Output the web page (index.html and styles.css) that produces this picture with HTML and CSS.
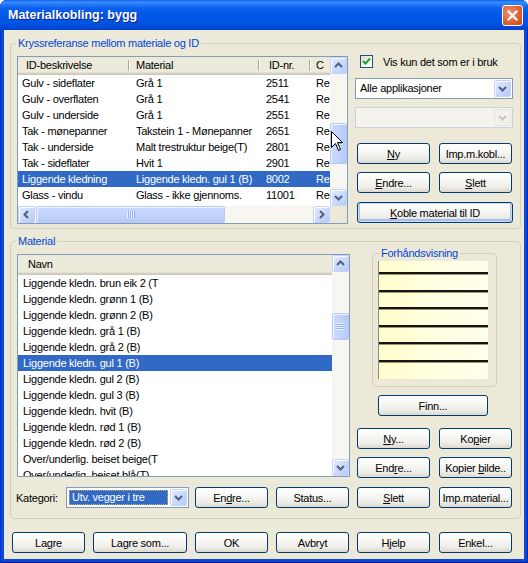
FILE: index.html
```html
<!DOCTYPE html>
<html>
<head>
<meta charset="utf-8">
<link rel="stylesheet" href="styles.css">
</head>
<body>
<div class="window">
  <div class="titlebar">
    <span class="title">Materialkobling: bygg</span>
    <span class="close"><svg width="13" height="13" viewBox="0 0 13 13"><path d="M2.5 2.5 L10.5 10.5 M10.5 2.5 L2.5 10.5" stroke="#fff" stroke-width="2.2" stroke-linecap="square"/></svg></span>
  </div>
  <div class="client">
    <div class="group g1">
      <span class="group-label">Kryssreferanse mellom materiale og ID</span>
      <div class="lv lv1">
        <div class="lv-body">
          <div class="lv-head cols1">
            <span class="hc">ID-beskrivelse</span><span class="hc">Material</span><span class="hc">ID-nr.</span><span class="hc">C</span>
          </div>
          <div class="row cols1"><span>Gulv - sideflater</span><span>Grå 1</span><span>2511</span><span>Re</span></div>
          <div class="row cols1"><span>Gulv - overflaten</span><span>Grå 1</span><span>2541</span><span>Re</span></div>
          <div class="row cols1"><span>Gulv - underside</span><span>Grå 1</span><span>2551</span><span>Re</span></div>
          <div class="row cols1"><span>Tak - mønepanner</span><span>Takstein 1 - Mønepanner</span><span>2651</span><span>Re</span></div>
          <div class="row cols1"><span>Tak - underside</span><span>Malt trestruktur beige(T)</span><span>2801</span><span>Re</span></div>
          <div class="row cols1"><span>Tak - sideflater</span><span>Hvit 1</span><span>2901</span><span>Re</span></div>
          <div class="row cols1 sel"><span>Liggende kledning</span><span>Liggende kledn. gul 1 (B)</span><span>8002</span><span>Re</span></div>
          <div class="row cols1"><span>Glass - vindu</span><span>Glass - ikke gjennoms.</span><span>11001</span><span>Re</span></div>
          <div class="row cols1"><span>Dør - karm</span><span>Grå 2</span><span>11011</span><span>Re</span></div>
        </div>
        <div class="vscroll">
          <span class="sbtn"><svg width="15" height="15" viewBox="0 0 15 15"><path d="M4 9 L7.5 5.5 L11 9" class="chev"/></svg></span>
          <div class="track"><span class="thumb thumb1"><span class="grip-h"></span></span></div>
          <span class="sbtn"><svg width="15" height="15" viewBox="0 0 15 15"><path d="M4 6 L7.5 9.5 L11 6" class="chev"/></svg></span>
        </div>
        <div class="hscroll">
          <span class="sbtn"><svg width="15" height="15" viewBox="0 0 15 15"><path d="M9 4 L5.5 7.5 L9 11" class="chev"/></svg></span>
          <div class="htrack"><span class="hthumb"><span class="grip-v"></span></span></div>
          <span class="sbtn"><svg width="15" height="15" viewBox="0 0 15 15"><path d="M6 4 L9.5 7.5 L6 11" class="chev"/></svg></span>
        </div>
        <div class="corner"></div>
        <svg class="cursor" width="13" height="21" viewBox="0 0 13 21"><path d="M0.5 0.5 L0.5 16.5 L4.5 12.5 L7.5 19.5 L9.5 18.5 L6.5 11.5 L11.5 11.5 Z" fill="#fff" stroke="#000" stroke-width="1"/></svg>
      </div>
      <div class="side1">
        <div class="check"><span class="box"><svg width="11" height="11" viewBox="0 0 11 11"><path d="M2 5 L4.5 7.5 L9 2.5" fill="none" stroke="#21A121" stroke-width="2"/></svg></span><span>Vis kun det som er i bruk</span></div>
        <div class="combo c-apps"><span class="combo-text">Alle applikasjoner</span><span class="sbtn cbtn"><svg width="15" height="15" viewBox="0 0 15 15"><path d="M4 6 L7.5 9.5 L11 6" class="chev"/></svg></span></div>
        <div class="combo disabled"><span class="combo-text"></span><span class="sbtn cbtn dis"><svg width="15" height="15" viewBox="0 0 15 15"><path d="M4 6 L7.5 9.5 L11 6" class="chev dchev"/></svg></span></div>
        <div class="btnrow r1"><button class="btn"><span><u>N</u>y</span></button><button class="btn"><span>Imp.m.kobl...</span></button></div>
        <div class="btnrow r2"><button class="btn"><span><u>E</u>ndre...</span></button><button class="btn"><span><u>S</u>lett</span></button></div>
        <div class="btnrow r3"><button class="btn wide def"><span><u>K</u>oble material til ID</span></button></div>
      </div>
    </div>

    <div class="group g2">
      <span class="group-label">Material</span>
      <div class="g2-top">
        <div class="lv lv2">
          <div class="lv-body">
            <div class="lv-head head2"><span class="hc hc2">Navn</span></div>
            <div class="row row2">Liggende kledn. brun eik 2 (T</div>
            <div class="row row2">Liggende kledn. grønn 1 (B)</div>
            <div class="row row2">Liggende kledn. grønn 2 (B)</div>
            <div class="row row2">Liggende kledn. grå 1 (B)</div>
            <div class="row row2">Liggende kledn. grå 2 (B)</div>
            <div class="row row2 sel">Liggende kledn. gul 1 (B)</div>
            <div class="row row2">Liggende kledn. gul 2 (B)</div>
            <div class="row row2">Liggende kledn. gul 3 (B)</div>
            <div class="row row2">Liggende kledn. hvit (B)</div>
            <div class="row row2">Liggende kledn. rød 1 (B)</div>
            <div class="row row2">Liggende kledn. rød 2 (B)</div>
            <div class="row row2">Over/underlig. beiset beige(T</div>
            <div class="row row2">Over/underlig. beiset blå(T)</div>
          </div>
          <div class="vscroll">
            <span class="sbtn"><svg width="15" height="15" viewBox="0 0 15 15"><path d="M4 9 L7.5 5.5 L11 9" class="chev"/></svg></span>
            <div class="track"><span class="thumb thumb2"><span class="grip-h"></span></span></div>
            <span class="sbtn"><svg width="15" height="15" viewBox="0 0 15 15"><path d="M4 6 L7.5 9.5 L11 6" class="chev"/></svg></span>
          </div>
        </div>
        <div class="side2">
          <div class="group pgroup">
            <span class="group-label">Forhåndsvisning</span>
            <div class="preview">
              <span class="pline"></span><span class="pline"></span><span class="pline"></span><span class="pline"></span><span class="pline"></span><span class="pline"></span>
            </div>
          </div>
          <button class="btn finn"><span>Finn...</span></button>
          <div class="btnrow r4"><button class="btn"><span><u>N</u>y...</span></button><button class="btn"><span>Ko<u>p</u>ier</span></button></div>
          <div class="btnrow r2"><button class="btn"><span>End<u>r</u>e...</span></button><button class="btn"><span>Kopier <u>b</u>ilde..</span></button></div>
        </div>
      </div>
      <div class="kat-row">
        <span class="kat-label">Kategori:</span>
        <div class="combo kat"><span class="combo-text"><span class="kat-sel">Utv. vegger i tre</span></span><span class="sbtn cbtn"><svg width="15" height="15" viewBox="0 0 15 15"><path d="M4 6 L7.5 9.5 L11 6" class="chev"/></svg></span></div>
        <button class="btn m6"><span>En<u>d</u>re...</span></button>
        <button class="btn m8"><span>Status...</span></button>
        <button class="btn m8"><span><u>S</u>lett</span></button>
        <button class="btn m9"><span>Imp.material...</span></button>
      </div>
    </div>

    <div class="bottom">
      <button class="btn"><span>Lagre</span></button>
      <button class="btn w94"><span>Lagre som...</span></button>
      <button class="btn"><span>OK</span></button>
      <button class="btn"><span>Avbryt</span></button>
      <button class="btn"><span>Hjelp</span></button>
      <button class="btn m9x"><span>Enkel...</span></button>
    </div>
  </div>
</div>
</body>
</html>
```

FILE: styles.css
```css
* { box-sizing: border-box; margin: 0; padding: 0; }
body {
  margin: 0;
  background: #ffffff;
  font-family: "Liberation Sans", Arial, sans-serif;
  font-size: 11px;
  letter-spacing: -0.25px;
  color: #000;
}
.window {
  width: 528px;
  height: 563px;
  display: flex;
  flex-direction: column;
  background: #0A48DA;
  border-radius: 7px 7px 0 0;
  overflow: hidden;
  box-shadow: inset 1px 0 #0831C8, inset -1px 0 #0426A8, inset 0 -1px #00138C;
}
.titlebar {
  height: 30px;
  flex: none;
  display: flex;
  align-items: center;
  justify-content: space-between;
  padding: 0 5px 0 8px;
  background: linear-gradient(#0B5EEE 0px, #3A8DFD 2px, #2B7DF8 4px, #0B61ED 8px, #0057E6 16px, #0054E2 23px, #0049D6 28px, #0040C8 30px);
}
.title {
  color: #fff;
  font-weight: bold;
  font-size: 12.5px;
  letter-spacing: 0;
  text-shadow: 1px 1px 0 #0B2390;
}
.close {
  width: 21px;
  height: 21px;
  border: 1px solid #fff;
  border-radius: 3px;
  background: radial-gradient(circle at 35% 35%, #F0906A 0%, #E26A3E 45%, #CC4316 100%);
  display: flex;
  align-items: center;
  justify-content: center;
}
.client {
  flex: 1;
  margin: 0 4px 4px 4px;
  background: #ECE9D8;
  padding: 13px 0 0 6px;
  display: flex;
  flex-direction: column;
  align-items: flex-start;
}
.group {
  position: relative;
  border: 1px solid #D0D0BF;
  border-radius: 4px;
}
.group-label {
  position: absolute;
  top: -7px;
  left: 5px;
  padding: 0 2px;
  background: #ECE9D8;
  color: #0046D5;
  line-height: 13px;
  white-space: nowrap;
}
.g1 {
  width: 511px;
  height: 186px;
  padding: 12px 0 0 6px;
  display: flex;
  align-items: flex-start;
}
.lv {
  border: 1px solid #7F9DB9;
  background: #fff;
  display: grid;
  position: relative;
}
.lv1 {
  width: 331px;
  height: 168px;
  grid-template-columns: 312px 17px;
  grid-template-rows: 149px 17px;
}
.lv-body { overflow: hidden; }
.lv-head {
  height: 18px;
  background: #EBEADB;
  box-shadow: inset 0 -1px #CBC7B8, inset 0 -2px #D6D2C2, inset 0 -3px #E2DECD;
}
.cols1 {
  display: grid;
  grid-template-columns: 112px 130px 51px 19px;
}
.hc {
  line-height: 16px;
  white-space: nowrap;
  overflow: hidden;
  background:
    linear-gradient(#ACA899, #ACA899) right 1px top 3px / 1px 11px no-repeat,
    linear-gradient(#fff, #fff) right 0 top 3px / 1px 11px no-repeat;
}
.cols1 .hc:nth-child(1) { padding-left: 8px; }
.cols1 .hc:nth-child(2) { padding-left: 6px; }
.cols1 .hc:nth-child(3) { padding-left: 9px; }
.cols1 .hc:nth-child(4) { padding-left: 5px; background: none; }
.row {
  height: 16px;
  line-height: 16px;
  white-space: nowrap;
  overflow: hidden;
}
.row span { overflow: hidden; white-space: nowrap; }
.row.cols1 span:nth-child(1) { padding-left: 4px; }
.row.cols1 span:nth-child(2) { padding-left: 6px; }
.row.cols1 span:nth-child(3) { padding-left: 6px; }
.row.cols1 span:nth-child(4) { padding-left: 5px; }
.row.sel { background: #316AC5; color: #fff; }

/* scrollbars */
.vscroll {
  display: flex;
  flex-direction: column;
  background: #F7F6F1;
}
.track { flex: 1; display: flex; flex-direction: column; }
.hscroll {
  display: flex;
  background: #F7F6F1;
}
.htrack { flex: 1; display: flex; }
.corner { background: #ECE9D8; }
.sbtn {
  flex: none;
  width: 17px;
  height: 17px;
  border: 1px solid #C3D3FD;
  border-radius: 2px;
  background: linear-gradient(135deg, #E3EBFE 0%, #CCDAFC 50%, #B7CAF5 100%);
  box-shadow: inset 1px 1px 0 #FBFCFF;
  display: flex;
  align-items: center;
  justify-content: center;
}
.chev { fill: none; stroke: #4D6185; stroke-width: 2; }
.dchev { stroke: #C9C7BA; }
.thumb {
  display: flex;
  align-items: center;
  justify-content: center;
  width: 17px;
  border: 1px solid #B6C9F6;
  border-radius: 2px;
  background: linear-gradient(90deg, #CAD9FD 0%, #C2D3FC 50%, #B6CAF6 100%);
  box-shadow: inset 1px 1px 0 #F3F6FE;
}
.thumb1 { margin-top: 49px; height: 41px; }
.thumb2 { margin-top: 41px; height: 27px; }
.grip-h {
  width: 7px;
  height: 7px;
  background: repeating-linear-gradient(#EEF4FE 0 1px, #8CB0F8 1px 2px);
}
.hthumb {
  display: flex;
  align-items: center;
  justify-content: center;
  margin-left: 1px;
  width: 189px;
  height: 17px;
  border: 1px solid #B6C9F6;
  border-radius: 2px;
  background: linear-gradient(#CAD9FD 0%, #C2D3FC 50%, #B6CAF6 100%);
  box-shadow: inset 1px 1px 0 #F3F6FE;
}
.grip-v {
  width: 8px;
  height: 7px;
  background: repeating-linear-gradient(90deg, #EEF4FE 0 1px, #8CB0F8 1px 2px);
}
.cursor {
  position: absolute;
  left: 313px;
  top: 74px;
}

/* right column 1 */
.side1 {
  width: 158px;
  margin-left: 7px;
  display: flex;
  flex-direction: column;
  align-items: flex-start;
}
.check {
  display: flex;
  align-items: center;
  height: 13px;
  margin: -1px 0 0 5px;
  white-space: nowrap;
}
.box {
  width: 13px;
  height: 13px;
  border: 1px solid #1C5180;
  background: linear-gradient(135deg, #DCDCD7 0%, #F4F4F0 60%, #FFFFFF 100%);
  margin-right: 10px;
  display: flex;
  align-items: center;
  justify-content: center;
}
.combo {
  width: 158px;
  height: 21px;
  border: 1px solid #7F9DB9;
  background: #fff;
  display: flex;
  align-items: center;
  padding: 1px;
}
.c-apps { margin-top: 10px; }
.combo.disabled {
  margin-top: 8px;
  background: #F4F3EE;
  border-color: #C9D2DD;
}
.combo-text {
  flex: 1;
  padding-left: 3px;
  white-space: nowrap;
  overflow: hidden;
  line-height: 17px;
}
.cbtn { height: 17px; }
.cbtn.dis {
  background: #F2F1EC;
  border-color: #E6E4DC;
  box-shadow: none;
}
.btnrow {
  display: flex;
  gap: 9px;
  margin-left: 2px;
}
.r1 { margin-top: 15px; }
.r2 { margin-top: 8px; }
.r3 { margin-top: 9px; }
.r4 { margin-top: 12px; }
.btn {
  flex: none;
  width: 73px;
  height: 21px;
  border: 1px solid #003C74;
  border-radius: 3px;
  background: linear-gradient(#FFFFFF 0%, #F7F7F4 40%, #EDECE6 75%, #DCD9CE 100%);
  font-family: inherit;
  font-size: 11px;
  letter-spacing: inherit;
  color: #000;
  display: flex;
  align-items: center;
  justify-content: center;
  white-space: nowrap;
  padding: 0;
}
.btn span { white-space: pre; }
.btn u { text-decoration: underline; text-underline-offset: 1px; }
.wide { width: 156px; }
.def { box-shadow: inset 0 0 0 1px #CEDCF7, inset 0 -1px 0 2px #A8BFEE; }

/* group 2 */
.g2 {
  width: 511px;
  height: 278px;
  margin-top: 12px;
  padding: 12px 0 0 6px;
}
.g2-top {
  display: flex;
  align-items: flex-start;
  height: 223px;
}
.lv2 {
  width: 333px;
  height: 223px;
  grid-template-columns: 314px 17px;
  grid-template-rows: 221px;
}
.head2 { height: 20px; display: flex; }
.hc2 { flex: 1; padding-left: 10px; line-height: 19px; background: none; }
.row2 { padding-left: 5px; }
.side2 {
  width: 158px;
  margin-left: 5px;
  display: flex;
  flex-direction: column;
  align-items: flex-start;
}
.pgroup {
  margin: -1px 0 0 17px;
  width: 125px;
  height: 134px;
  padding: 7px 0 0 5px;
}
.pgroup .group-label { left: 6px; }
.preview {
  width: 110px;
  height: 118px;
  border-left: 1px solid #8E8C78;
  background: linear-gradient(90deg, #FFFECB 0%, #FFFFDF 45%, #FFFFEC 100%);
  display: flex;
  flex-direction: column;
  padding-top: 11px;
}
.pline {
  display: block;
  height: 3px;
  flex: none;
  margin-bottom: 14.5px;
  background: linear-gradient(#151515 0 2px, #9C9677 2px 3px);
}
.finn { width: 110px; margin: 8px 0 0 23px; }
.kat-row {
  display: flex;
  align-items: center;
  margin: 10px 0 0 -1px;
  height: 21px;
}
.kat-label { width: 50px; white-space: nowrap; }
.combo.kat { width: 123px; }
.kat .combo-text { padding: 1px 2px 1px 1px; line-height: 15px; }
.kat-sel {
  display: block;
  background: #316AC5;
  color: #fff;
  padding-left: 3px;
  outline: 1px dotted #C8B463;
  outline-offset: -1px;
}
.m6 { margin-left: 6px; }
.m8 { margin-left: 8px; }
.m9 { margin-left: 9px; }
.bottom {
  display: flex;
  gap: 8px;
  margin: 13px 0 0 2px;
}
.w94 { width: 94px; }
.m9x { margin-left: 1px; }
```
